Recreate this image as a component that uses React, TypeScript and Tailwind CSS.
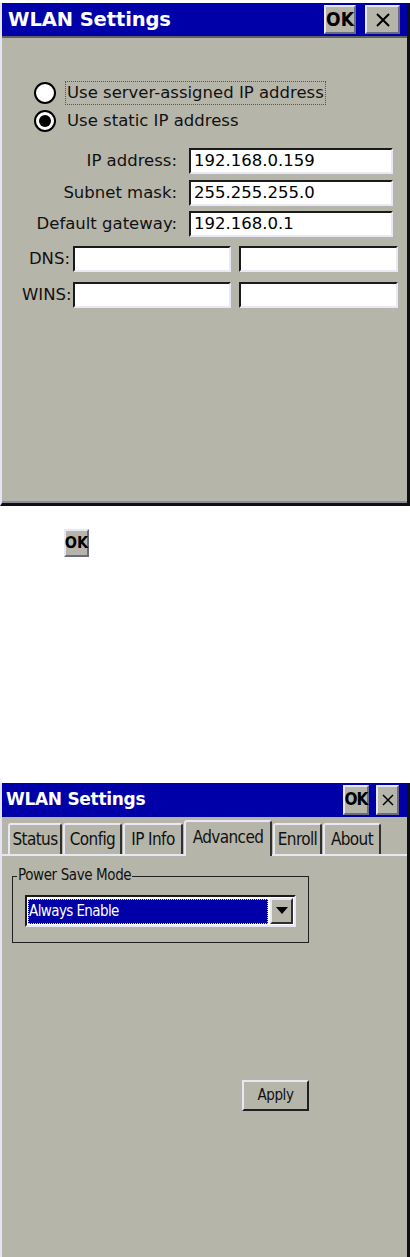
import React from "react";

const font = { fontFamily: '"DejaVu Sans", Tahoma, sans-serif' };
const cond = { fontFamily: '"DejaVu Sans Condensed", "DejaVu Sans", sans-serif', fontStretch: "condensed" as const };

function TitleBar() {
  return (
    <div className="flex h-[33px] items-center bg-[#0000a8] pl-[6px] pr-[7px]">
      <span className="text-[19.5px] font-bold text-white tracking-[-0.1px]">WLAN Settings</span>
      <div className="ml-auto flex items-center gap-[9px]">
        <div className="flex h-[29px] w-[32px] items-center justify-center border-2 border-t-[#e8e8f4] border-l-[#e8e8f4] border-r-[#6a6a80] border-b-[#6a6a80] bg-[#b6b5aa] text-[19px] font-bold text-black" style={cond}>OK</div>
        <div className="flex h-[29px] w-[35px] items-center justify-center border-2 border-t-[#e8e8f4] border-l-[#e8e8f4] border-r-[#6a6a80] border-b-[#6a6a80] bg-[#b6b5aa]">
          <svg width="14" height="14" viewBox="0 0 14 14"><path d="M1 1 L13 13 M13 1 L1 13" stroke="#000" strokeWidth="2" /></svg>
        </div>
      </div>
    </div>
  );
}

function Field({ w, value }: { w: string; value?: string }) {
  return (
    <div className={`flex h-[26px] ${w} items-center border-2 border-t-[#1a1a1a] border-l-[#1a1a1a] border-r-[#e8e8f8] border-b-[#e8e8f8] bg-white pl-[3px] text-[16.5px] leading-[20px] text-black`}>
      {value}
    </div>
  );
}

function Radio({ checked, label, focus }: { checked: boolean; label: string; focus?: boolean }) {
  return (
    <div className="flex h-[28px] items-center">
      <div className="flex h-[22px] w-[22px] items-center justify-center rounded-full border-2 border-black bg-white">
        {checked && <div className="h-[12px] w-[12px] rounded-full bg-black" />}
      </div>
      <span className={`ml-[10px] px-[1px] py-[2px] text-[16.5px] leading-[18px] text-[#111] ${focus ? "outline outline-1 outline-dotted outline-[#555]" : ""}`}>{label}</span>
    </div>
  );
}

function Tab({ label, selected, w }: { label: string; selected?: boolean; w: string }) {
  if (selected) {
    return (
      <div className={`-mb-[2px] flex h-[36px] ${w} items-start justify-center rounded-t-[3px] border-l-2 border-t-2 border-r-2 border-l-[#e8e8f4] border-t-[#e8e8f4] border-r-[#303030] bg-[#b6b5aa] pt-[3px] text-[17px] tracking-[-0.6px] text-[#111]`}>
        {label}
      </div>
    );
  }
  return (
    <div className={`flex h-[31px] ${w} items-center justify-center rounded-t-[3px] border-l-2 border-t-2 border-r-2 border-l-[#e8e8f4] border-t-[#e8e8f4] border-r-[#303030] bg-[#b6b5aa] text-[17px] tracking-[-0.6px] text-[#111]`}>
      {label}
    </div>
  );
}

export default function App() {
  return (
    <div className="w-[410px] h-[1257px] bg-white" style={font}>
      {/* Window 1 */}
      <div className="mt-[3px] flex h-[503px] w-[410px] flex-col border-l-2 border-r-[3px] border-b-[3px] border-l-[#e4e4f4] border-r-[#101010] border-b-[#101010] bg-[#b6b5aa]">
        <TitleBar />
        <div className="h-[2px] bg-[#606060]" />
        <div className="flex flex-1 flex-col border-b-2 border-b-[#8a8aa0] pl-[32px]">
          <div className="mt-[41px] flex flex-col">
            <Radio checked={false} label="Use server-assigned IP address" focus />
            <Radio checked label="Use static IP address" />
          </div>
          <div className="mt-[13px] flex flex-col gap-[5.5px]">
            {[
              ["IP address:", "192.168.0.159"],
              ["Subnet mask:", "255.255.255.0"],
              ["Default gateway:", "192.168.0.1"],
            ].map(([l, v]) => (
              <div key={l} className="flex h-[26px] items-center">
                <div className="w-[143px] text-right text-[16.5px] leading-[20px] text-[#111]">{l}</div>
                <div className="ml-[12px]"><Field w="w-[204px]" value={v} /></div>
              </div>
            ))}
          </div>
          <div className="-ml-[12px] mt-[9px] flex flex-col gap-[10px]">
            {["DNS:", "WINS:"].map((l) => (
              <div key={l} className="flex h-[26px] items-center">
                <div className="w-[48px] whitespace-nowrap text-right text-[16.5px] leading-[20px] text-[#111]">{l}</div>
                <div className="ml-[3px]"><Field w="w-[158px]" /></div>
                <div className="ml-[8px]"><Field w="w-[159px]" /></div>
              </div>
            ))}
          </div>
        </div>
      </div>

      {/* OK icon */}
      <div className="ml-[64px] mt-[23px] flex h-[28px] w-[25px] items-center justify-center border-2 border-t-[#e8e8f4] border-l-[#e8e8f4] border-r-[#6a6a80] border-b-[#6a6a80] bg-[#b6b5aa] text-[16px] font-bold text-black" style={cond}>OK</div>

      {/* Window 2 */}
      <div className="mt-[226px] flex h-[474px] w-[410px] flex-col border-l-2 border-r-[3px] border-l-[#e4e4f4] border-r-[#101010] bg-[#b6b5aa]">
        <div className="flex h-[34px] items-center bg-[#0000a8] pl-[4px] pr-[8px]">
          <span className="text-[17px] font-bold tracking-[-0.3px] text-white">WLAN Settings</span>
          <div className="ml-auto flex items-center gap-[7px]">
            <div className="flex h-[30px] w-[26px] items-center justify-center border-2 border-t-[#e8e8f4] border-l-[#e8e8f4] border-r-[#6a6a80] border-b-[#6a6a80] bg-[#b6b5aa] text-[17px] font-bold tracking-[-1px] text-black" style={cond}>OK</div>
            <div className="flex h-[30px] w-[23px] items-center justify-center border-2 border-t-[#e8e8f4] border-l-[#e8e8f4] border-r-[#6a6a80] border-b-[#6a6a80] bg-[#b6b5aa]">
              <svg width="12" height="12" viewBox="0 0 12 12"><path d="M1 1 L11 11 M11 1 L1 11" stroke="#000" strokeWidth="1.5" /></svg>
            </div>
          </div>
        </div>
        <div className="flex h-[39px] items-end gap-[1px] border-b-2 border-b-[#e8e8f4] pl-[6px]" style={cond}>
          <Tab label="Status" w="w-[54px]" />
          <Tab label="Config" w="w-[59px]" />
          <Tab label="IP Info" w="w-[60px]" />
          <Tab label="Advanced" w="w-[88px]" selected />
          <Tab label="Enroll" w="w-[49px]" />
          <Tab label="About" w="w-[58px]" />
        </div>
        <div className="flex flex-1 flex-col pl-[10px]" style={cond}>
          <div className="relative mt-[20px] h-[67px] w-[297px] border border-[#202020]">
            <span className="absolute -top-[12px] left-[4px] bg-[#b6b5aa] px-[1px] text-[15px] leading-[20px] tracking-[-0.4px] text-[#111]">Power Save Mode</span>
            <div className="ml-[12px] mt-[18px] flex h-[32px] w-[271px] items-center border-2 border-t-[#1a1a1a] border-l-[#1a1a1a] border-r-[#e8e8f8] border-b-[#e8e8f8] bg-white p-[1px]">
              <div className="flex h-[25px] flex-1 items-center bg-[#0000a8] pl-[1px] text-[15px] tracking-[-0.6px] text-white outline outline-1 outline-dotted outline-[#e0e040] -outline-offset-1">Always Enable</div>
              <div className="ml-[2px] flex h-[26px] w-[23px] items-center justify-center border-2 border-t-[#e8e8f4] border-l-[#e8e8f4] border-r-[#303030] border-b-[#303030] bg-[#b6b5aa]">
                <svg width="12" height="8" viewBox="0 0 12 8"><path d="M0 0 L12 0 L6 7 Z" fill="#000" /></svg>
              </div>
            </div>
          </div>
          <div className="ml-[230px] mt-[137px] flex h-[31px] w-[67px] items-center justify-center border-2 border-t-[#e8e8f4] border-l-[#e8e8f4] border-r-[#202020] border-b-[#202020] bg-[#b6b5aa] text-[15px] tracking-[-0.4px] text-[#111]">Apply</div>
        </div>
      </div>
    </div>
  );
}
